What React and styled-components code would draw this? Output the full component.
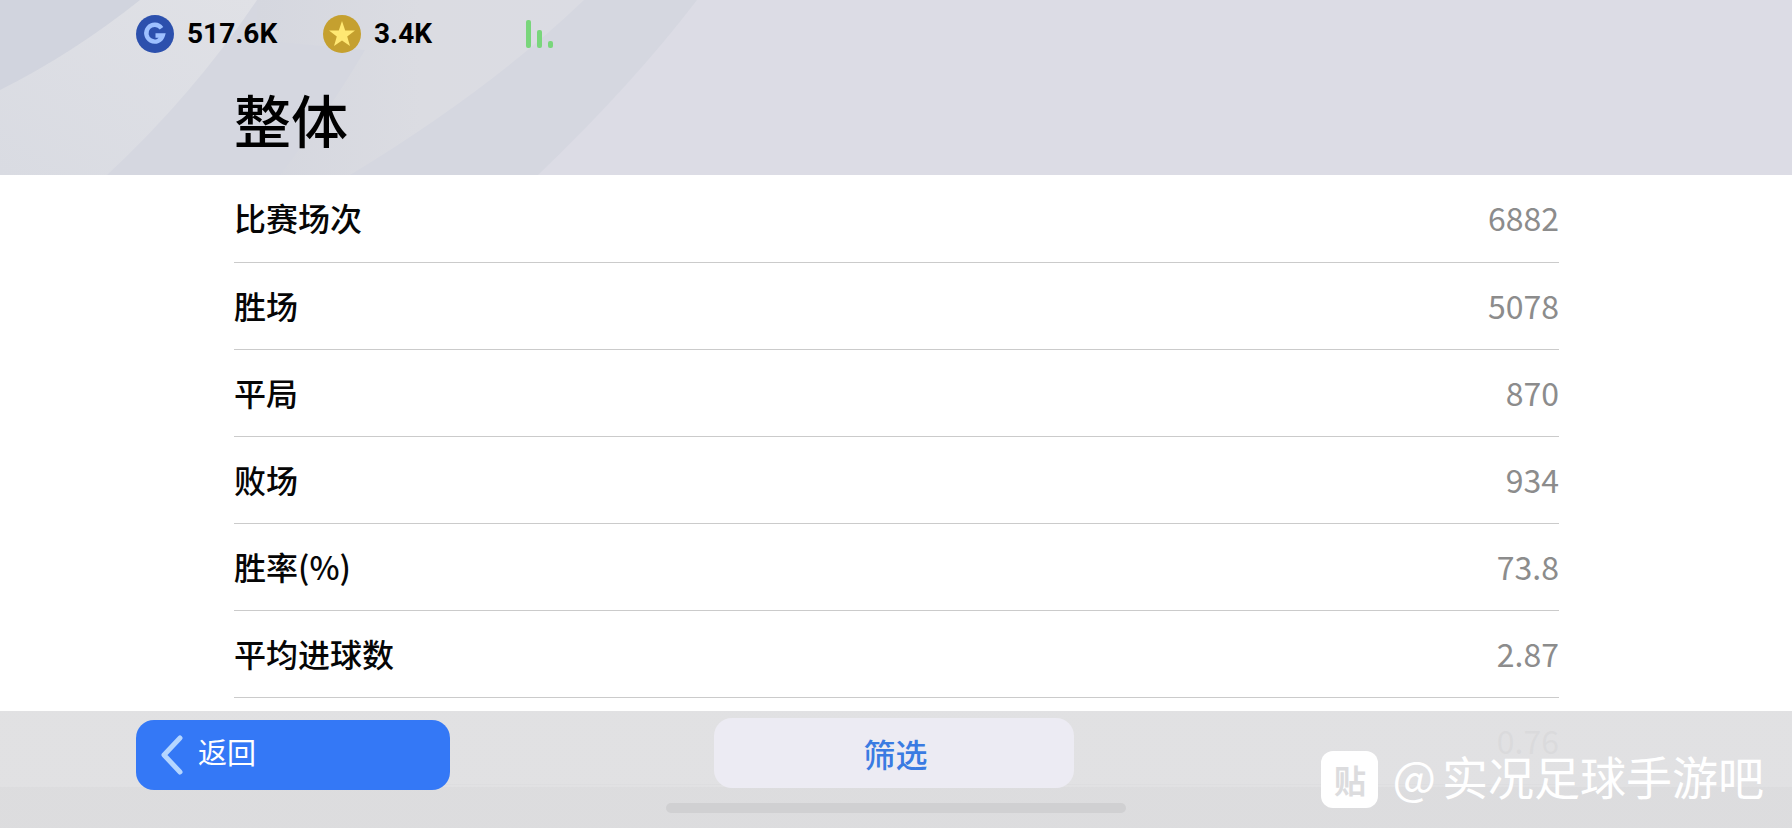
import React from "react";
import styled, { createGlobalStyle } from "styled-components";

const GlobalStyle = createGlobalStyle`
  *, *::before, *::after { box-sizing: border-box; }
  html, body { margin: 0; }
  body {
    background: #fff;
    color: #060606;
    font-family: "Noto Sans CJK SC", sans-serif;
    overflow: hidden;
  }
`;

const Screen = styled.div`
  position: relative;
  display: flex;
  flex-direction: column;
  height: 100vh;
  overflow: hidden;
`;

const Header = styled.header`
  position: relative;
  height: 175px;
  flex: none;
  background: #dcdce5;
  overflow: hidden;
`;

const Waves = styled.svg`
  position: absolute;
  top: 0;
  left: 0;
`;

const StatusBar = styled.div`
  position: relative;
  display: flex;
  align-items: center;
  height: 68px;
  padding-left: 136px;
`;

const Currency = styled.div`
  display: flex;
  align-items: center;
  gap: 13px;
  width: ${(p) => p.$width}px;
  color: #000;
  font-family: Roboto, "Noto Sans CJK SC", sans-serif;
  font-size: 28px;
  font-weight: 700;
  line-height: 38px;
`;

const Title = styled.h1`
  position: relative;
  margin: 0;
  padding: 8px 234px 0;
  color: #000;
  font-size: 57px;
  font-weight: 500;
  line-height: 84px;
`;

const Content = styled.main`
  flex: 1;
  padding: 0 233px 0 234px;
`;

const Stats = styled.table`
  width: 100%;
  border-collapse: collapse;
  font-size: 32px;
  line-height: 44px;
`;

const Row = styled.tr`
  height: 87px;
  border-bottom: 1px solid #cbcbcb;
`;

const Label = styled.th`
  padding: 0 0 2px;
  font-weight: 500;
  text-align: left;
`;

const Value = styled.td`
  padding: 0 0 2px;
  color: #8c8c8c;
  text-align: right;
`;

const Footer = styled.footer`
  position: absolute;
  left: 0;
  right: 0;
  bottom: 0;
  height: 117px;
  padding-top: 7px;
  background: linear-gradient(rgba(223, 223, 225, 0.94) 76px, rgba(219, 219, 221, 0.96) 76px);
`;

const Actions = styled.nav`
  display: grid;
  grid-template-columns: 1fr 360px 1fr;
  height: 72px;
  padding: 0 141px 0 136px;
`;

const Button = styled.button`
  display: flex;
  align-items: center;
  height: 70px;
  border: 0;
  border-radius: 18px;
  font-family: inherit;
  cursor: pointer;
`;

const BackButton = styled(Button)`
  align-self: end;
  gap: 14px;
  width: 314px;
  padding: 0 24px;
  background: #3478f6;
  color: #fff;
  font-size: 29px;
  font-weight: 400;
  line-height: 40px;
`;

const BackLabel = styled.span`
  padding-bottom: 8px;
`;

const FilterButton = styled(Button)`
  justify-content: center;
  padding: 0 0 0 4px;
  background: #ecebf3;
  color: #3a7be2;
  font-size: 32px;
  font-weight: 500;
`;

const HomeIndicator = styled.div`
  width: 460px;
  height: 10px;
  margin: 13px auto 0;
  border-radius: 5px;
  background: #d0d0d2;
`;

const Watermark = styled.div`
  position: absolute;
  right: 28px;
  bottom: 20px;
  display: flex;
  align-items: center;
  gap: 14px;
  color: #fff;
  white-space: nowrap;
`;

const Badge = styled.span`
  display: grid;
  place-items: center;
  width: 57px;
  height: 57px;
  border-radius: 12px;
  background: #fff;
  color: #dcdcde;
  font-size: 32px;
  font-weight: 700;
  line-height: 57px;
`;

const Handle = styled.span`
  display: flex;
  gap: 6px;
  padding-bottom: 8px;
  font-size: 46px;
  line-height: 50px;
`;

const stats = [
  ["比赛场次", "6882"],
  ["胜场", "5078"],
  ["平局", "870"],
  ["败场", "934"],
  ["胜率(%)", "73.8"],
  ["平均进球数", "2.87"],
  ["", "0.76"],
];

function HeaderWaves() {
  return (
    <Waves width="700" height="175" viewBox="0 0 700 175" aria-hidden="true">
      <defs>
        <linearGradient id="band" x1="0" y1="1" x2="1" y2="0">
          <stop offset="0" stopColor="#d9dbe2" />
          <stop offset="1" stopColor="#e0e1e6" />
        </linearGradient>
        <linearGradient id="fan" x1="0" y1="0" x2="1" y2="0">
          <stop offset="0" stopColor="#d5d7df" />
          <stop offset="0.5" stopColor="#dbdce2" />
          <stop offset="1" stopColor="#dbdce3" />
        </linearGradient>
      </defs>
      <path d="M0 0H697Q632 85 538 175H0Z" fill="#d5d7e0" />
      <path d="M257 0H584Q490 90 350 175H280Q330 110 365 50L257 40Z" fill="url(#fan)" />
      <path d="M0 0H257Q193 95 107 175H0Z" fill="url(#band)" />
      <path d="M0 0H140Q72 54 0 90Z" fill="#d1d4de" />
    </Waves>
  );
}

function CoinG() {
  return (
    <svg width="38" height="38" viewBox="0 0 38 38" aria-hidden="true">
      <circle cx="19" cy="19" r="19" fill="#2c50ad" />
      <path d="M25.5 13.2A8.4 8.4 0 1 0 26.8 20.5H19.5" fill="none" stroke="#9dc0ff" strokeWidth="4.4" />
    </svg>
  );
}

function CoinStar() {
  return (
    <svg width="38" height="38" viewBox="0 0 38 38" aria-hidden="true">
      <circle cx="19" cy="19" r="19" fill="#c5a02f" />
      <path d="M19 6L22.2 15.4L32 15.6L24.2 21.5L27 31L19 25.4L11 31L13.8 21.5L6 15.6L15.8 15.4Z" fill="#ffe873" />
    </svg>
  );
}

function Signal() {
  return (
    <svg width="28" height="28" viewBox="0 0 28 28" role="img" aria-label="信号">
      <rect x="0" y="0" width="5" height="28" rx="2" fill="#79d67b" />
      <rect x="11" y="10" width="5" height="18" rx="2" fill="#79d67b" />
      <rect x="22" y="21" width="5" height="7" rx="2" fill="#79d67b" />
    </svg>
  );
}

function Chevron() {
  return (
    <svg width="24" height="40" viewBox="0 0 24 40" aria-hidden="true">
      <path d="M20 3L4 20L20 37" fill="none" stroke="#b5d6ff" strokeWidth="5" strokeLinecap="round" strokeLinejoin="round" />
    </svg>
  );
}

export default function App() {
  return (
    <Screen>
      <GlobalStyle />
      <Header>
        <HeaderWaves />
        <StatusBar>
          <Currency $width={187}>
            <CoinG />
            517.6K
          </Currency>
          <Currency $width={203}>
            <CoinStar />
            3.4K
          </Currency>
          <Signal />
        </StatusBar>
        <Title>整体</Title>
      </Header>
      <Content>
        <Stats>
          <tbody>
            {stats.map(([label, value]) => (
              <Row key={value}>
                <Label scope="row">{label}</Label>
                <Value>{value}</Value>
              </Row>
            ))}
          </tbody>
        </Stats>
      </Content>
      <Footer>
        <Actions>
          <BackButton type="button">
            <Chevron />
            <BackLabel>返回</BackLabel>
          </BackButton>
          <FilterButton type="button">筛选</FilterButton>
        </Actions>
        <HomeIndicator />
      </Footer>
      <Watermark>
        <Badge>贴</Badge>
        <Handle>
          <span>@</span>
          <span>实况足球手游吧</span>
        </Handle>
      </Watermark>
    </Screen>
  );
}
